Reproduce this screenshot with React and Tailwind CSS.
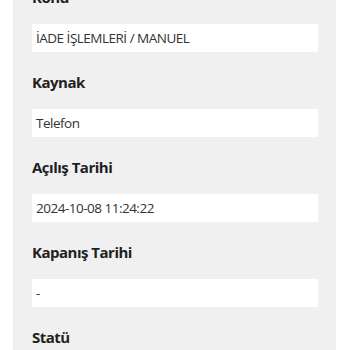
const fields = [
  { label: "Konu", value: "İADE İŞLEMLERİ / MANUEL" },
  { label: "Kaynak", value: "Telefon" },
  { label: "Açılış Tarihi", value: "2024-10-08 11:24:22" },
  { label: "Kapanış Tarihi", value: "-" },
  { label: "Statü", value: "Açık" },
];

export default function App() {
  return (
    <div
      className="h-[350px] w-[350px] overflow-hidden bg-white"
      style={{ fontFamily: '"Open Sans", "Noto Sans", sans-serif' }}
    >
      <div className="ml-[13px] w-[323px] bg-[#f0f0f0] pl-[19px] pr-[18px] pb-10">
        <div className="-mt-[13px] flex flex-col">
          {fields.map((f, i) => (
            <div key={f.label} className={i === 0 ? "" : "mt-[20px]"}>
              <div className="text-[15px] leading-[20px] font-bold tracking-[-0.5px] text-[#1f1f1f]">
                {f.label}
              </div>
              <div className="mt-[17px] flex h-[28px] items-center bg-white px-[4px] text-[13.5px] tracking-[-0.5px] text-[#333]">
                {f.value}
              </div>
            </div>
          ))}
        </div>
      </div>
    </div>
  );
}
